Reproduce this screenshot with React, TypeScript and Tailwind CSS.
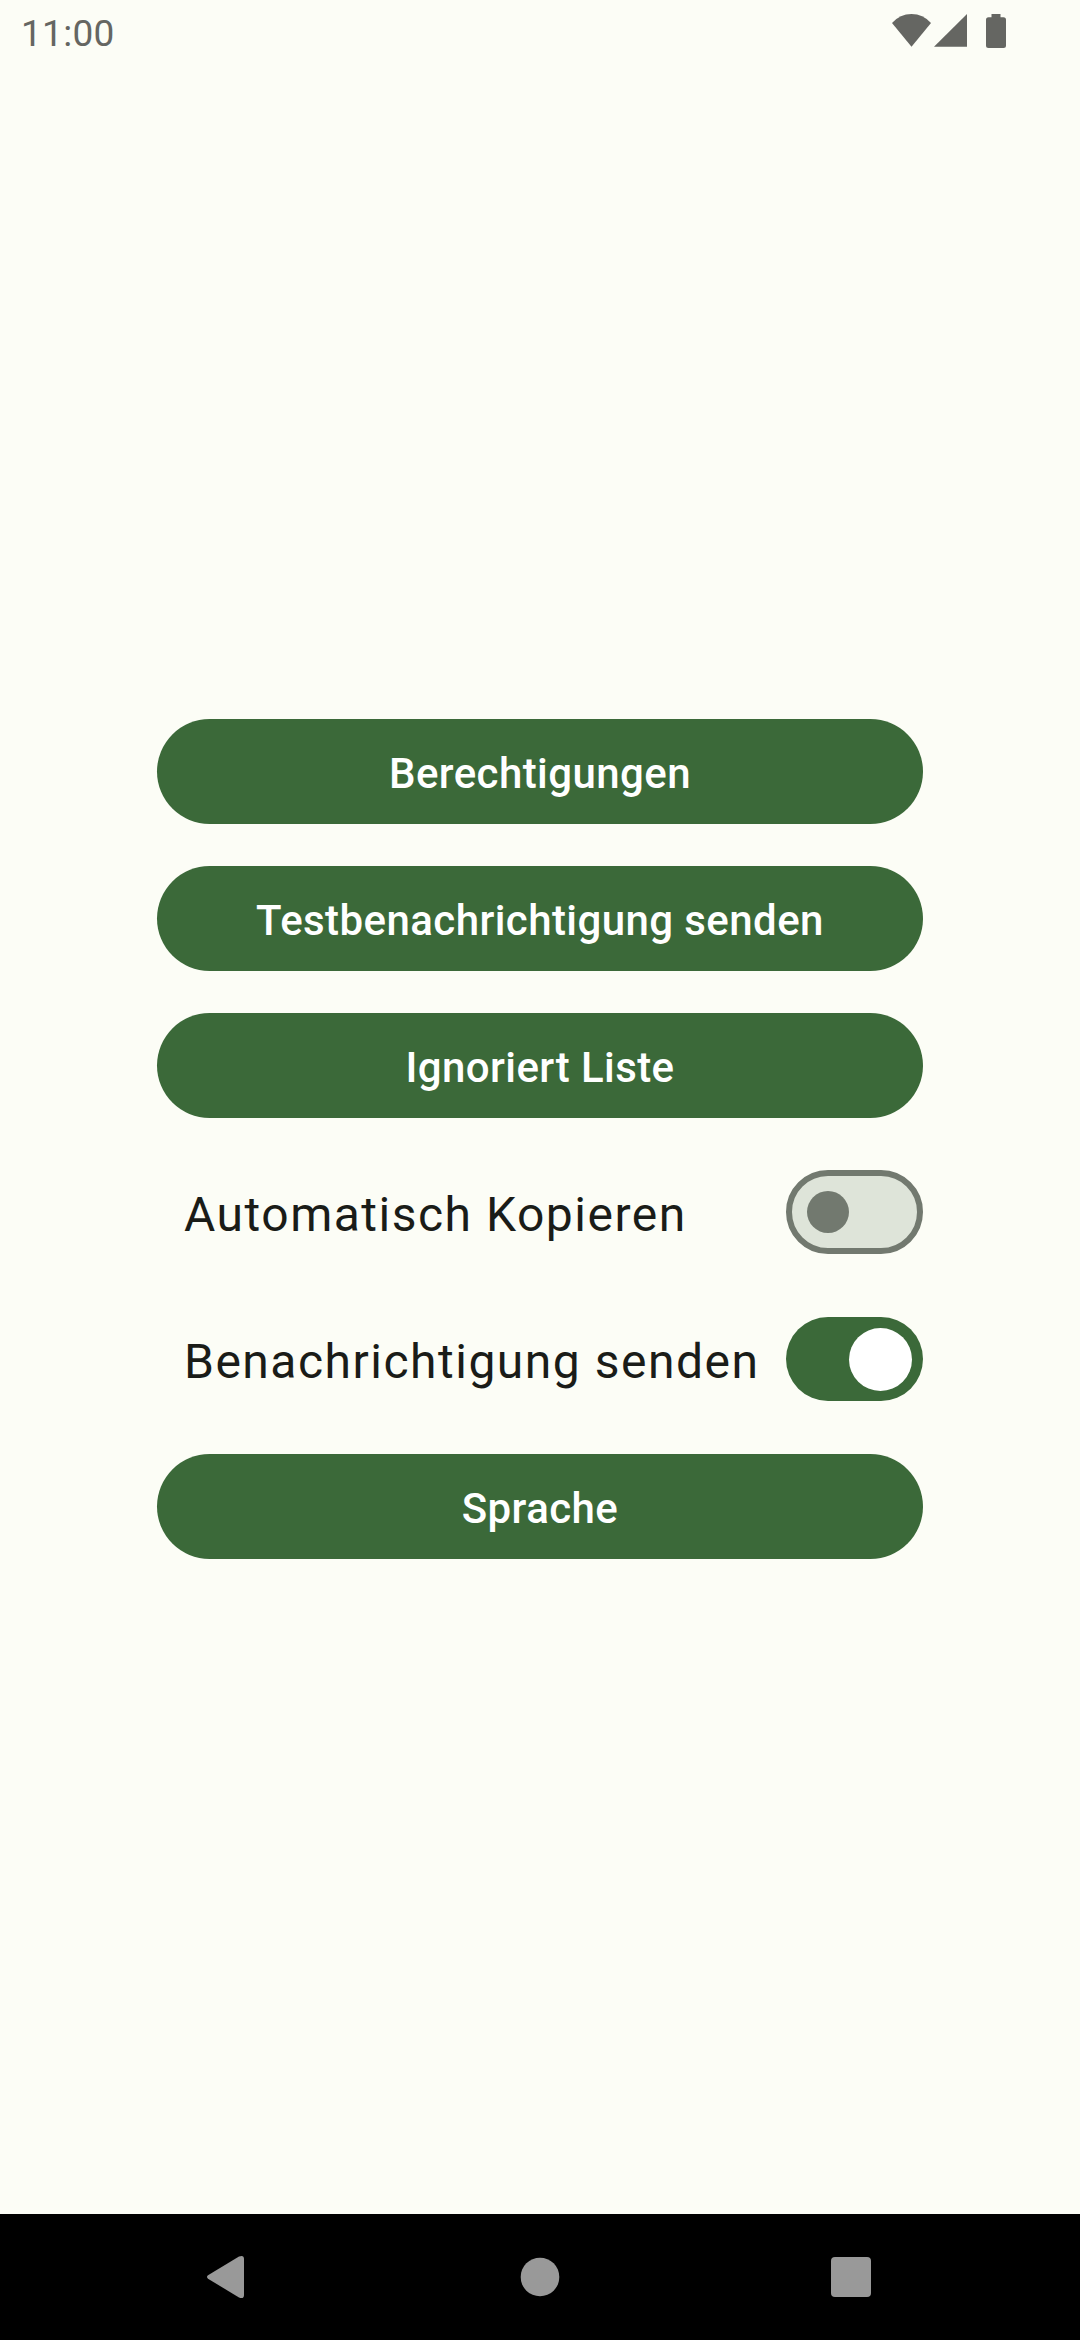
import React from 'react';

function Pill({ label }: { label: string }) {
  return (
    <button className="flex h-[105px] w-full items-center justify-center rounded-full bg-[#3b6939] pt-[5px] text-[42px] leading-[60px] font-medium tracking-[0.42px] text-white">
      {label}
    </button>
  );
}

function SwitchRow({ label, on }: { label: string; on: boolean }) {
  return (
    <div className="flex h-[105px] items-start justify-between pt-[10px] pl-[27px]">
      <span className="pt-[3px] text-[48px] leading-[84px] tracking-[1.5px] whitespace-nowrap text-[#1a1c18]">{label}</span>
      {on ? (
        <span role="switch" aria-checked="true" className="flex h-[84px] w-[137px] shrink-0 items-start justify-end rounded-full bg-[#3b6939] pt-[11px] pr-[11px]">
          <i className="size-[63px] rounded-full bg-white" />
        </span>
      ) : (
        <span role="switch" aria-checked="false" className="flex h-[84px] w-[137px] shrink-0 items-center rounded-full border-[6px] border-[#72796f] bg-[#dee4d9] pl-[15px]">
          <i className="size-[42px] rounded-full bg-[#72796f]" />
        </span>
      )}
    </div>
  );
}

export default function App() {
  return (
    <div className="flex h-[2340px] w-[1080px] flex-col overflow-hidden bg-[#fcfdf6] font-[Roboto,sans-serif]">
      <header className="flex h-[66px] shrink-0 items-center justify-between pr-[72px] pl-[21px] text-[#656662]">
        <span className="pt-[1px] text-[37px] leading-[44px] tracking-[0.3px]">11:00</span>
        <svg className="h-[66px] w-[118px]" viewBox="890 0 118 66" fill="currentColor">
          <path d="M911.5 46.7 L892 23 Q900 14 911.5 14 Q923 14 931 23 Z" />
          <path d="M967 14V46.7H934Z" />
          <path d="M991.5 14h9v3.3h3q2.500 0 2.500 2.500v25.700q0 2.500-2.500 2.500h-15q-2.500 0-2.500-2.500v-25.700q0-2.500 2.500-2.500h3z" />
        </svg>
      </header>
      <main className="flex flex-1 flex-col gap-[42px] px-[157px] pt-[653px]">
        <Pill label="Berechtigungen" />
        <Pill label="Testbenachrichtigung senden" />
        <Pill label="Ignoriert Liste" />
        <SwitchRow label="Automatisch Kopieren" on={false} />
        <SwitchRow label="Benachrichtigung senden" on />
        <Pill label="Sprache" />
      </main>
      <nav className="h-[126px] shrink-0 bg-black">
        <svg className="h-[126px] w-full" viewBox="0 0 1080 126" fill="#999">
          <path d="M208 61.300L239 42.500Q244 40.500 244 45V81Q244 85.500 239 83.500L208 64.700Q206 63 208 61.300Z" />
          <circle cx="540" cy="63" r="19.300" />
          <rect x="831" y="43" width="40" height="40" rx="4" />
        </svg>
      </nav>
    </div>
  );
}
